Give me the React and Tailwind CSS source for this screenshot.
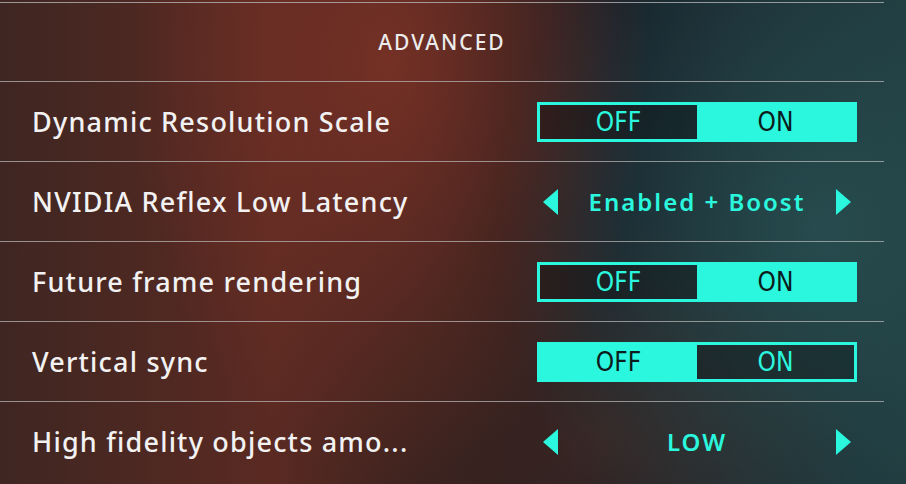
import React from "react";

function Toggle({ on }) {
  return (
    <div className="flex h-[40px] w-[320px] border-[3px] border-[#2af7dd] text-[26px] leading-none [font-family:'DejaVu_Sans_Condensed','DejaVu_Sans',sans-serif] [font-stretch:condensed]">
      {on ? (
        <>
          <div className="flex w-[157px] items-center justify-center bg-black/25 text-[#2af7dd]">OFF</div>
          <div className="flex flex-1 items-center justify-center bg-[#2af7dd] text-[#0c1b1b]">ON</div>
        </>
      ) : (
        <>
          <div className="flex w-[157px] items-center justify-center bg-[#2af7dd] text-[#0c1b1b]">OFF</div>
          <div className="flex flex-1 items-center justify-center bg-black/25 text-[#2af7dd]">ON</div>
        </>
      )}
    </div>
  );
}

function Arrow({ dir }) {
  return (
    <svg width="15" height="26" viewBox="0 0 15 26" className="shrink-0">
      {dir === "left" ? (
        <polygon points="15,0 15,26 0,13" fill="#2af7dd" />
      ) : (
        <polygon points="0,0 0,26 15,13" fill="#2af7dd" />
      )}
    </svg>
  );
}

function Selector({ value }) {
  return (
    <div className="flex h-[40px] w-[320px] items-center justify-between px-[6px]">
      <Arrow dir="left" />
      <span className="text-[24px] font-semibold leading-none tracking-[2px] text-[#2af7dd] [font-family:'Noto_Sans',sans-serif]">
        {value}
      </span>
      <Arrow dir="right" />
    </div>
  );
}

function Row({ label, children }) {
  return (
    <div className="flex h-[80px] items-center justify-between border-t border-[#b4b4b4]/75 pl-[32px] pr-[27px]">
      <span className="text-[27px] font-medium leading-none tracking-[1.2px] text-[#f2f2f2] [font-family:'Noto_Sans',sans-serif]">
        {label}
      </span>
      {children}
    </div>
  );
}

export default function App() {
  return (
    <div className="h-[484px] w-[906px] overflow-hidden bg-[radial-gradient(ellipse_260px_420px_at_390px_60px,rgba(125,50,38,0.85),transparent),radial-gradient(ellipse_320px_380px_at_820px_230px,rgba(42,84,86,0.75),transparent),radial-gradient(ellipse_260px_220px_at_600px_440px,rgba(70,40,34,0.7),transparent),linear-gradient(90deg,#3f2622,#5a2a22_30%,#2b1e1d_55%,#161f28_68%,#1f373b_100%)] pt-[2px]">
      <div className="w-[884px]">
        <div className="flex h-[79px] items-center justify-center border-t border-[#b4b4b4]/80">
          <span className="text-[21px] font-medium leading-none tracking-[2px] text-[#ececec] [font-family:'Noto_Sans',sans-serif]">
            ADVANCED
          </span>
        </div>
        <Row label="Dynamic Resolution Scale"><Toggle on /></Row>
        <Row label="NVIDIA Reflex Low Latency"><Selector value="Enabled + Boost" /></Row>
        <Row label="Future frame rendering"><Toggle on /></Row>
        <Row label="Vertical sync"><Toggle on={false} /></Row>
        <Row label="High fidelity objects amo..."><Selector value="LOW" /></Row>
      </div>
    </div>
  );
}
